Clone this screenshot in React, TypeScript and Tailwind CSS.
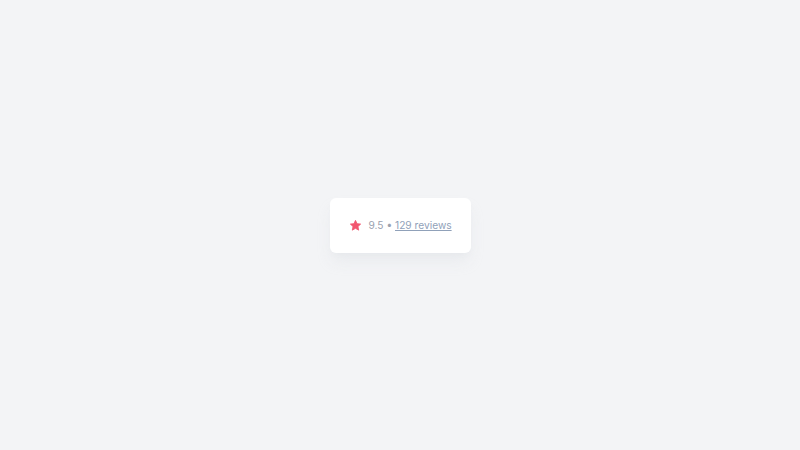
import React from "react";

export default function App() {
  return (
    <div className="w-[800px] h-[450px] bg-gray-100 flex items-center justify-center" style={{ fontFamily: "Inter, 'Noto Sans', sans-serif" }}>
      <div className="bg-white rounded-md shadow-lg shadow-gray-200/80 w-[141px] h-[55px] pl-[19px] flex items-center gap-[7px] text-[10.2px] leading-[13px] text-gray-400">
        <svg width="13" height="13" viewBox="0 0 24 24" className="shrink-0">
          <path fill="#f2566f" d="M12 2.5l2.9 6.1 6.6.8-4.9 4.6 1.3 6.6L12 17.3l-5.9 3.3 1.3-6.6-4.9-4.6 6.6-.8z" stroke="#f2566f" strokeWidth="1.5" strokeLinejoin="round" />
        </svg>
        <span className="whitespace-nowrap">9.5 • <a href="#" className="underline text-slate-400">129 reviews</a></span>
      </div>
    </div>
  );
}
